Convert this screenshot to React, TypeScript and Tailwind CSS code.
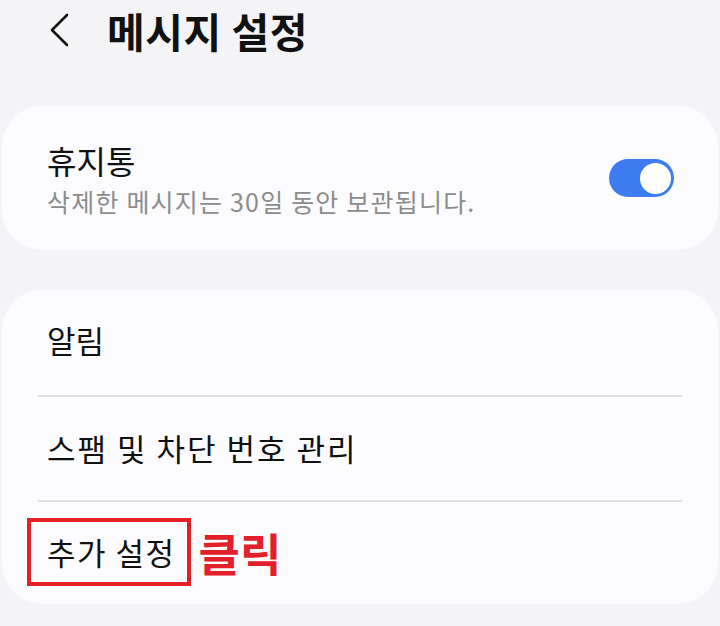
import React from "react";

export default function App() {
  const font = { fontFamily: '"Noto Sans CJK KR", "Noto Sans", sans-serif' };
  return (
    <div className="w-[720px] h-[626px] bg-[#f4f4f6] overflow-hidden" style={font}>
      <div className="h-[106px] flex items-start pt-[5px]">
        <div className="w-[107px] flex justify-start pl-[48px] pt-[8px]">
          <svg width="22" height="34" viewBox="0 0 22 34" fill="none">
            <path d="M19 2 L4 17 L19 32" stroke="#111" strokeWidth="2.6" strokeLinecap="round" strokeLinejoin="round" />
          </svg>
        </div>
        <div className="text-[41px] leading-[50px] font-bold text-[#111] tracking-[0.5px]">메시지 설정</div>
      </div>

      <div className="mx-[2px] h-[144px] rounded-[40px] bg-[#fcfcfe] flex items-center justify-between pl-[45px] pr-[44px]">
        <div className="flex flex-col">
          <div className="text-[32px] leading-[40px] text-[#111]">휴지통</div>
          <div className="text-[25px] leading-[30px] text-[#8c8c8c] mt-[6px] tracking-[1.2px]">삭제한 메시지는 30일 동안 보관됩니다.</div>
        </div>
        <div className="w-[65px] h-[38px] rounded-full bg-[#3d7cf1] flex items-center justify-end pr-[3px]">
          <div className="w-[31px] h-[31px] rounded-full bg-white" />
        </div>
      </div>

      <div className="mx-[2px] mt-[40px] h-[314px] rounded-[40px] bg-[#fcfcfe] flex flex-col">
        <div className="h-[105px] flex items-center pl-[45px] pb-[4px] text-[31px] text-[#111]">알림</div>
        <div className="mx-[36px] h-[2px] bg-[#e0e0e2]" />
        <div className="h-[103px] flex items-center pl-[45px] text-[31px] text-[#111] tracking-[2px]">스팸 및 차단 번호 관리</div>
        <div className="mx-[36px] h-[2px] bg-[#e0e0e2]" />
        <div className="h-[102px] flex items-center pl-[25px] pb-[2px]">
          <div className="h-[68px] border-[4px] border-[#e3202a] flex items-center pl-[16px] pr-[11px] text-[31px] text-[#111] tracking-[1.5px]">
            추가 설정
          </div>
          <div className="ml-[8px] text-[45px] font-bold text-[#e3202a] leading-none">클릭</div>
        </div>
      </div>
    </div>
  );
}
